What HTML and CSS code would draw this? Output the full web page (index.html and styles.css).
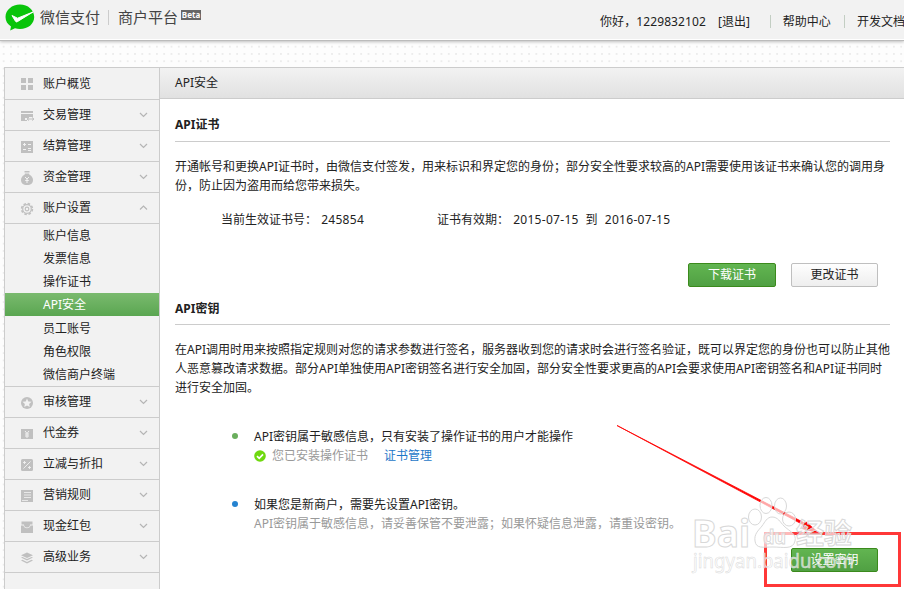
FILE: index.html
```html
<!DOCTYPE html>
<html lang="zh-CN">
<head>
    <meta charset="UTF-8">
    <meta name="viewport" content="width=device-width, initial-scale=1.0">
    <title>微信支付 商户平台 - API安全</title>
    <link rel="stylesheet" href="styles.css">
</head>
<body>
<header class="header">
    <div class="logo">
        <svg class="logo-mark" width="30" height="27" viewBox="0 0 30 27">
            <path d="M15 .5C23 .5 29.2 6 29.2 13S23 25 15 25c-1.800 0-3.400-.2-5-.7L5.200 26.500l.8-4C2.500 20.200.5 17 .5 13 .5 6 7 .5 15 .5z" fill="#09c40a"/>
            <path d="M7 11.500l3.500 5.800c.4.700 1.100.8 1.800.4L28 8 12.500 14.200z" fill="#fff" stroke="#fff" stroke-width="1" stroke-linejoin="round"/>
        </svg>
        <span class="logo-name">微信支付</span>
        <span class="logo-sub">商户平台</span>
        <span class="beta">Beta</span>
    </div>
    <nav class="user-nav">
        <span class="hello">你好，1229832102</span>
        <a class="logout" href="#">[退出]</a>
        <i class="bar"></i>
        <a class="help" href="#">帮助中心</a>
        <i class="bar"></i>
        <a class="docs" href="#">开发文档</a>
    </nav>
</header>

<div class="page">
    <aside class="sidebar">
        <a class="menu-item" href="#">
            <svg class="icon" viewBox="0 0 14 14"><path d="M1 1h5v5H1zM8 1h5v5H8zM1 8h5v5H1zM8 8h5v5H8z"/></svg>
            账户概览
        </a>
        <a class="menu-item" href="#">
            <svg class="icon" viewBox="0 0 14 14"><path d="M1 2h12v2H1zM1 5h12v3H9v1H5v2h2v1H1z"/><path d="M7 10h7M9 8.500L7 10l2 1.500M12 8.500l2 1.500-2 1.500" fill="none" stroke="#c0c0c0"/></svg>
            交易管理
            <svg class="arrow" viewBox="0 0 9 6"><path d="M1 1l3.500 3.500L8 1"/></svg>
        </a>
        <a class="menu-item" href="#">
            <svg class="icon" viewBox="0 0 14 14"><path d="M1 1h12v12H1z"/><path d="M3 4.500h3M4.500 3v3M8 4.500h3M3 9.500h3M8 8.500h3M8 10.500h3" fill="none" stroke="#f2f2f2"/></svg>
            结算管理
            <svg class="arrow" viewBox="0 0 9 6"><path d="M1 1l3.500 3.500L8 1"/></svg>
        </a>
        <a class="menu-item" href="#">
            <svg class="icon" viewBox="0 0 14 14"><path d="M4.500 0h5v1.500h-5zM5 2.500h4l.5 1.200C12 5 13 7 13 9c0 3-2 5-6 5s-6-2-6-5c0-2 1-4 3.500-5.300z"/><path d="M5 6l2 2 2-2M7 8v4M5.200 9.500h3.600" fill="none" stroke="#f2f2f2"/></svg>
            资金管理
            <svg class="arrow" viewBox="0 0 9 6"><path d="M1 1l3.500 3.500L8 1"/></svg>
        </a>
        <a class="menu-item" href="#">
            <svg class="icon" viewBox="0 0 14 14"><circle cx="7" cy="7" r="5.400" fill="none" stroke="#c0c0c0" stroke-width="1.600" stroke-dasharray="2.500 1.740"/><circle cx="7" cy="7" r="4.300" fill="none" stroke="#c0c0c0" stroke-width="1.200"/><circle cx="7" cy="7" r="1.800" fill="none" stroke="#c0c0c0" stroke-width="1.200"/></svg>
            账户设置
            <svg class="arrow" viewBox="0 0 9 6"><path d="M1 4.500L4.500 1 8 4.500"/></svg>
        </a>
        <div class="submenu">
            <a href="#">账户信息</a>
            <a href="#">发票信息</a>
            <a href="#">操作证书</a>
            <a class="current" href="#">API安全</a>
            <a href="#">员工账号</a>
            <a href="#">角色权限</a>
            <a href="#">微信商户终端</a>
        </div>
        <a class="menu-item" href="#">
            <svg class="icon" viewBox="0 0 14 14"><circle cx="7" cy="7" r="6"/><path d="M7 2.500l1.300 3 3.200.3-2.400 2.100.7 3.200L7 9.400l-2.800 1.700.7-3.200-2.400-2.100 3.200-.3z" fill="#f2f2f2"/></svg>
            审核管理
            <svg class="arrow" viewBox="0 0 9 6"><path d="M1 1l3.500 3.500L8 1"/></svg>
        </a>
        <a class="menu-item" href="#">
            <svg class="icon" viewBox="0 0 14 14"><path d="M1 2h12v10H1z"/><path d="M5 4l2 2.500L9 4M7 6.500V11M5 7h4M5 9h4" fill="none" stroke="#f2f2f2"/></svg>
            代金券
            <svg class="arrow" viewBox="0 0 9 6"><path d="M1 1l3.500 3.500L8 1"/></svg>
        </a>
        <a class="menu-item" href="#">
            <svg class="icon" viewBox="0 0 14 14"><rect x="1" y="1" width="12" height="12" rx="1.500"/><path d="M10.500 3.500l-7 7M3 4.500h3M4.500 3v3M8 9.500h3M9.500 8v3" fill="none" stroke="#f2f2f2" stroke-width=".9"/></svg>
            立减与折扣
            <svg class="arrow" viewBox="0 0 9 6"><path d="M1 1l3.500 3.500L8 1"/></svg>
        </a>
        <a class="menu-item" href="#">
            <svg class="icon" viewBox="0 0 14 14"><path d="M1 1h12v12H1z"/><path d="M4 3.500h7M4 6h7M4 8.500h7M2 11.500h6" fill="none" stroke="#f2f2f2" stroke-width=".8"/></svg>
            营销规则
            <svg class="arrow" viewBox="0 0 9 6"><path d="M1 1l3.500 3.500L8 1"/></svg>
        </a>
        <a class="menu-item" href="#">
            <svg class="icon" viewBox="0 0 14 14"><path d="M1.500 1.500h11v3H10a3 3 0 0 1-6 0H1.500zM1 5.500h2.500a3.600 3.600 0 0 0 7 0H13V13H1z"/></svg>
            现金红包
            <svg class="arrow" viewBox="0 0 9 6"><path d="M1 1l3.500 3.500L8 1"/></svg>
        </a>
        <a class="menu-item" href="#">
            <svg class="icon" viewBox="0 0 14 14"><path d="M7 1.500l6 2.700-6 2.700-6-2.700zM1 6.500l1.500-.6L7 8l4.500-2.100 1.500.6-6 3zM1 9.400l1.500-.6L7 10.900l4.500-2.100 1.500.6-6 3z"/></svg>
            高级业务
            <svg class="arrow" viewBox="0 0 9 6"><path d="M1 1l3.500 3.500L8 1"/></svg>
        </a>
    </aside>

    <main class="main">
        <div class="title-bar">API安全</div>

        <section class="section cert">
            <h3>API证书</h3>
            <p class="intro">开通帐号和更换API证书时，由微信支付签发，用来标识和界定您的身份；部分安全性要求较高的API需要使用该证书来确认您的调用身<br>份，防止因为盗用而给您带来损失。</p>
            <div class="cert-info">
                <span class="cert-no">当前生效证书号： <span class="num">245854</span></span>
                <span>证书有效期： <span class="num">2015-07-15 &nbsp;到&nbsp; 2016-07-15</span></span>
            </div>
            <div class="buttons">
                <a class="btn btn-green" href="#">下载证书</a>
                <a class="btn" href="#">更改证书</a>
            </div>
        </section>

        <section class="section key">
            <h3>API密钥</h3>
            <p class="intro">在API调用时用来按照指定规则对您的请求参数进行签名，服务器收到您的请求时会进行签名验证，既可以界定您的身份也可以防止其他<br>人恶意篡改请求数据。部分API单独使用API密钥签名进行安全加固，部分安全性要求更高的API会要求使用API密钥签名和API证书同时<br>进行安全加固。</p>
            <ul class="steps">
                <li class="step">
                    <div>API密钥属于敏感信息，只有安装了操作证书的用户才能操作</div>
                    <div class="tip">
                        <svg class="ok" width="12" height="12" viewBox="0 0 12 12"><circle cx="6" cy="6" r="5.800" fill="#6fd90f"/><path d="M3 6.200l2.200 2.100L9 4.300" fill="none" stroke="#fff" stroke-width="1.700"/></svg>
                        <span>您已安装操作证书</span>
                        <a class="link" href="#">证书管理</a>
                    </div>
                </li>
                <li class="step step-blue">
                    <div>如果您是新商户，需要先设置API密钥。</div>
                    <div class="tip">API密钥属于敏感信息，请妥善保管不要泄露；如果怀疑信息泄露，请重设密钥。</div>
                </li>
            </ul>
            <div class="buttons set-key">
                <a class="btn btn-green" href="#">设置密钥</a>
            </div>
        </section>
    </main>
</div>

<!-- red arrow and frame pointing at the button, with the site watermark on top -->
<svg class="overlay" width="904" height="593" viewBox="0 0 904 593">
    <path d="M617 425.500L806.500 524 805.500 526z" fill="#f00" stroke="#f00" stroke-width=".8"/>
    <path d="M820 533.500l-18-4.500 4-7.500z" fill="#f00"/>
    <rect x="765.500" y="533.500" width="134" height="52" fill="none" stroke="#ff3838" stroke-width="3"/>
    <g class="watermark">
        <text x="692" y="547" font-size="37" font-weight="bold" textLength="58" lengthAdjust="spacingAndGlyphs">Bai</text>
        <ellipse cx="755" cy="517" rx="6.500" ry="8"/>
        <ellipse cx="766" cy="505.500" rx="6" ry="8"/>
        <ellipse cx="780.500" cy="506" rx="6" ry="8"/>
        <ellipse cx="789" cy="519" rx="6.500" ry="7"/>
        <path d="M772 517c6 0 8 5 12 9 5 5 13 8 11 15-2 9-12 6-22 6s-17 2-18-6c-1-7 3-10 7-15 3-4 5-9 10-9z"/>
        <text x="763" y="544" font-size="20" font-weight="bold" textLength="23" lengthAdjust="spacingAndGlyphs">du</text>
        <text x="796" y="544" font-size="28" font-weight="bold" textLength="56" lengthAdjust="spacingAndGlyphs">经验</text>
        <text class="site" x="693" y="568" font-size="19" textLength="161" lengthAdjust="spacingAndGlyphs">jingyan.baidu.com</text>
    </g>
</svg>
</body>
</html>
```
FILE: styles.css
```css
* {
    box-sizing: border-box;
}

body {
    margin: 0;
    height: 593px;
    overflow: hidden;
    position: relative;
    font: 12px/19px "Noto Sans", "Noto Sans CJK SC", sans-serif;
    color: #222;
    background-color: #fff;
}

a {
    color: inherit;
    text-decoration: none;
}

.header {
    height: 41px;
    display: flex;
    justify-content: space-between;
    background: #f2f2f2;
    border-bottom: 1px solid #bbb;
    box-shadow: inset 0 -1px 0 #fff, 0 1px 3px rgba(0, 0, 0, 0.25);
    white-space: nowrap;
    position: relative;
}

.logo {
    display: flex;
    padding-left: 5px;
}

.logo-mark {
    margin-top: 4px;
}

.logo-name,
.logo-sub {
    margin-top: 6px;
    font-size: 15px;
    line-height: 23px;
    color: #444;
}

.logo-name {
    margin-left: 5px;
}

.logo-sub {
    margin-left: 8px;
    margin-top: 10px;
    height: 15px;
    line-height: 15px;
    padding-left: 9px;
    border-left: 1px solid #ccc;
}

.beta {
    margin: 10px 0 0 3px;
    width: 20px;
    height: 10px;
    font-size: 8px;
    line-height: 9px;
    font-weight: bold;
    text-align: center;
    color: #fff;
    background: #666;
}

.user-nav {
    width: 304px;
    display: flex;
    flex-shrink: 0;
    align-items: center;
    padding-top: 3px;
}

.user-nav > * {
    flex-shrink: 0;
}

.hello {
    letter-spacing: 0.1px;
}

.logout {
    margin-left: 12px;
}

.bar {
    width: 1px;
    height: 13px;
    background: #c3cec3;
}

.logout + .bar {
    margin: 0 12px 0 20px;
}

.help + .bar {
    margin: 0 12px 0 13px;
}

.page {
    height: 548px;
    display: flex;
    padding: 26px 0 0 4px;
    background: radial-gradient(circle, #ececec 0.8px, transparent 1.2px) 0 2px / 7.3px 7.3px #fdfdfd;
}

.sidebar {
    width: 156px;
    flex-shrink: 0;
    background: #f2f2f2;
    border: 1px solid #ccc;
    border-bottom: none;
    height: 522px;
}

.menu-item {
    height: 31px;
    display: flex;
    align-items: center;
    padding: 0 11px 1px 15px;
    border-bottom: 1px solid #ccc;
}

.menu-item:first-child {
    height: 32px;
}

.icon {
    width: 14px;
    height: 14px;
    margin: 2px 9px 0 0;
    fill: #c0c0c0;
}

.arrow {
    width: 9px;
    height: 6px;
    margin: 1px 0 0 auto;
    fill: none;
    stroke: #b5b5b5;
    stroke-width: 1.2;
}

.submenu {
    height: 163px;
    border-bottom: 1px solid #ccc;
}

.submenu a {
    display: block;
    line-height: 23px;
    padding-left: 38px;
}

.submenu .current {
    color: #fff;
    background: linear-gradient(#7aba6e, #5aa651);
}

.submenu .current + a {
    padding-top: 1px;
}

.main {
    flex: 1;
    background: #fff;
    border-top: 1px solid #ccc;
}

.title-bar {
    height: 31px;
    line-height: 30px;
    padding-left: 15px;
    background: linear-gradient(#f2f2f2, #e1e1e1);
    border-bottom: 1px solid #ccc;
}

.section {
    padding: 0 14px 0 15px;
}

.cert {
    height: 183px;
}

.section h3 {
    margin: 0;
    height: 43px;
    padding-top: 16px;
    font-size: 12px;
    border-bottom: 1px solid #ccc;
}

.key h3 {
    padding-top: 17px;
}

.intro {
    margin: 15px 0 0;
    white-space: nowrap;
}

.cert-info {
    display: flex;
    margin: 15px 0 0 46px;
}

.cert-no {
    width: 216px;
}

.num {
    margin-left: 1px;
    letter-spacing: 0.3px;
}

.buttons {
    display: flex;
    justify-content: flex-end;
    gap: 15px;
    margin: 34px 12px 0 0;
}

.btn {
    width: 87px;
    height: 24px;
    line-height: 21px;
    text-align: center;
    background: linear-gradient(#fefefe, #eee);
    border: 1px solid #bfbfbf;
    border-radius: 2px;
}

.btn-green {
    width: 88px;
    color: #fff;
    background: linear-gradient(#62b551, #50a043);
    border-color: #3b8a1c;
}

.steps {
    list-style: none;
    margin: 30px 0 0 57px;
    padding: 0;
}

.step {
    display: grid;
    grid-template-columns: 22px 1fr;
    margin-bottom: 30px;
}

.step::before {
    content: "";
    grid-row: 1 / 3;
    width: 6px;
    height: 6px;
    margin-top: 6px;
    border-radius: 50%;
    background: #6aae5d;
}

.step-blue::before {
    background: #2583d0;
}

.tip {
    display: flex;
    align-items: center;
    color: #999;
}

.ok {
    margin-right: 6px;
}

.link {
    margin-left: 16px;
    color: #1e78c8;
}

.set-key {
    margin-top: -15px;
}

.set-key .btn {
    width: 87px;
}

.overlay {
    position: absolute;
    top: 0;
    left: 0;
}

.watermark {
    font-family: "Noto Sans", "Noto Sans CJK SC", sans-serif;
    fill: rgba(255, 255, 255, 0.65);
    stroke: #d8d8d8;
    stroke-width: 1;
}

.watermark .site {
    stroke-width: 0.5;
}
```
